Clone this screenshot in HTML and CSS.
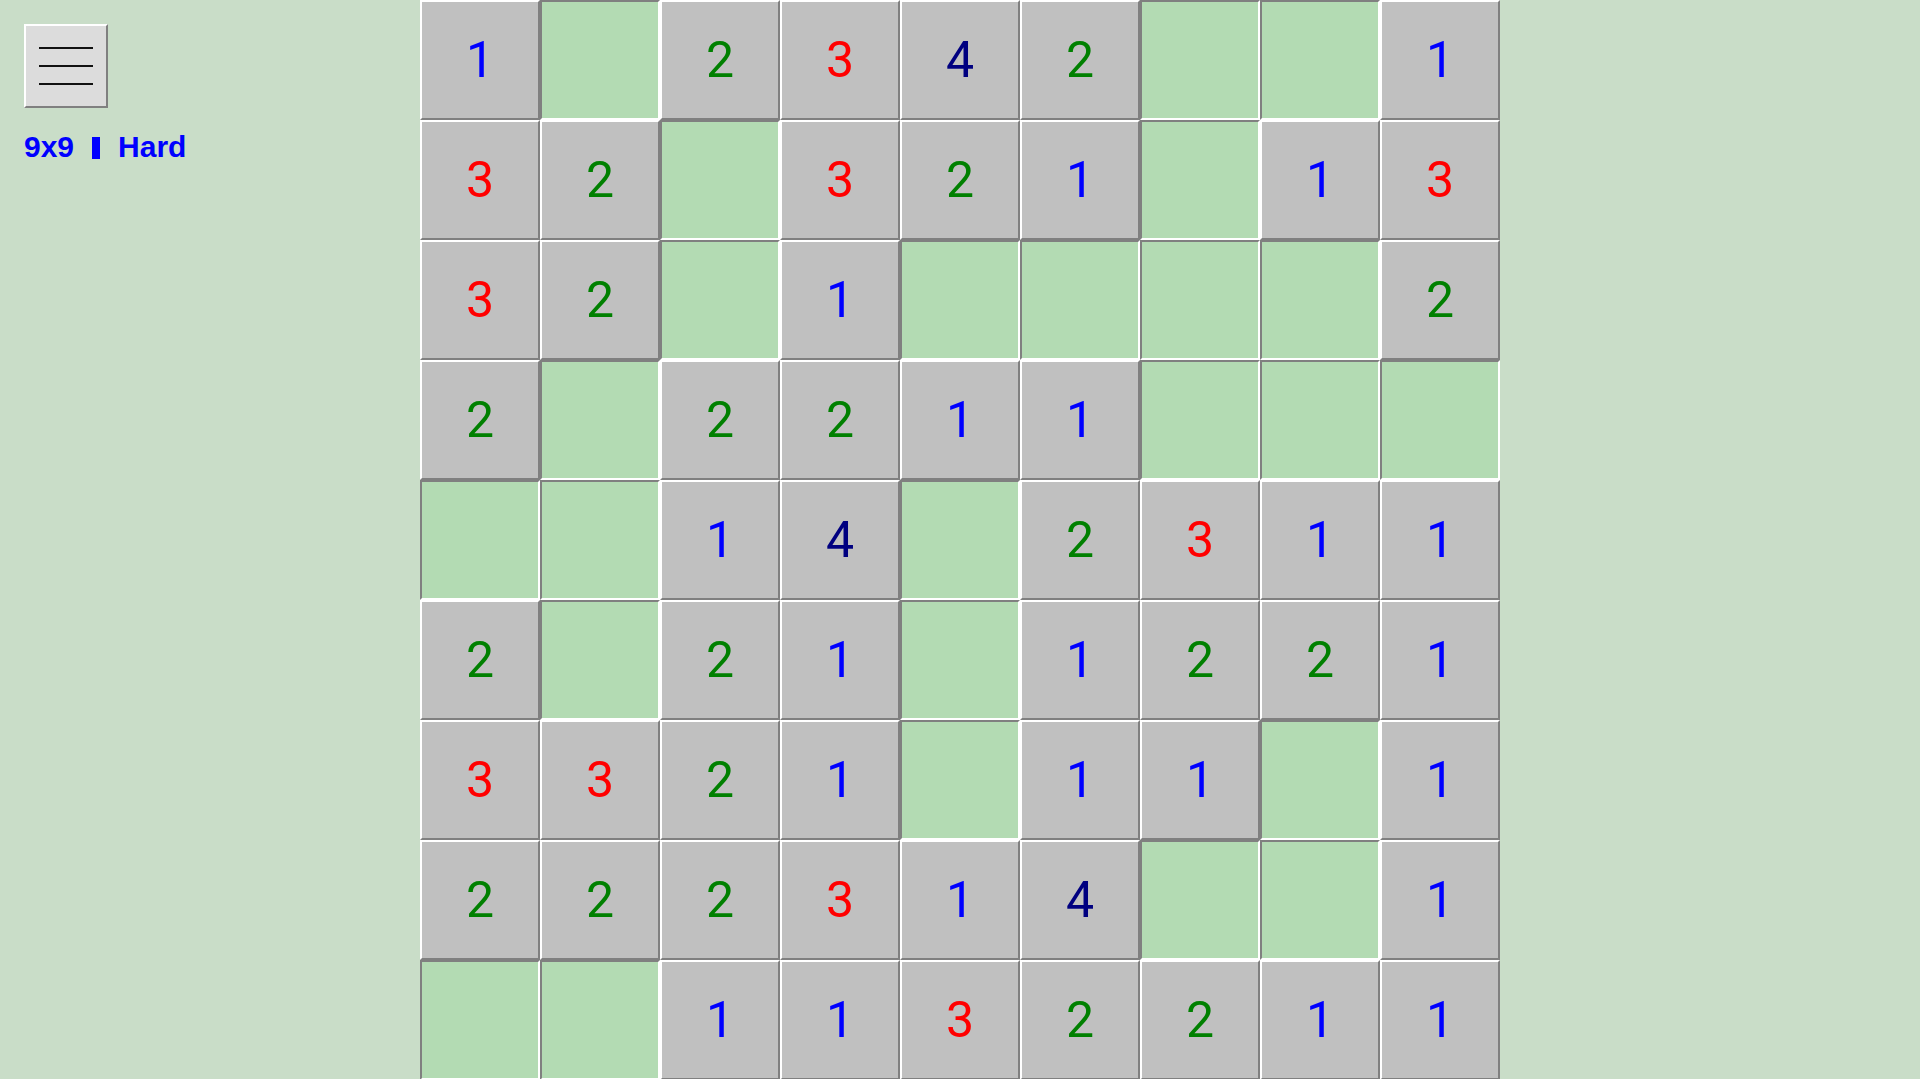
FILE: index.html
```html
<!DOCTYPE html>
<html lang="en">
<head>
    <meta charset="UTF-8" />
    <title>Minesweeper 9x9</title>
    <link rel="stylesheet" href="styles.css">
</head>
<body>
<div class="app">
    <!-- Left panel: menu + game info -->
    <div class="panel">
        <button class="menu-btn" aria-label="Menu">
            <span></span><span></span><span></span>
        </button>
        <div class="info">9x9 <span class="sep"></span> Hard</div>
    </div>

    <!-- Board -->
    <div class="board" id="board"></div>
</div>

<script>
    // 0 = opened empty, otherwise number of neighbouring mines
    const layout = [
        [1, 0, 2, 3, 4, 2, 0, 0, 1],
        [3, 2, 0, 3, 2, 1, 0, 1, 3],
        [3, 2, 0, 1, 0, 0, 0, 0, 2],
        [2, 0, 2, 2, 1, 1, 0, 0, 0],
        [0, 0, 1, 4, 0, 2, 3, 1, 1],
        [2, 0, 2, 1, 0, 1, 2, 2, 1],
        [3, 3, 2, 1, 0, 1, 1, 0, 1],
        [2, 2, 2, 3, 1, 4, 0, 0, 1],
        [0, 0, 1, 1, 3, 2, 2, 1, 1]
    ];

    const board = document.getElementById('board');
    layout.forEach(row => {
        row.forEach(n => {
            const cell = document.createElement('div');
            if (n === 0) {
                cell.className = 'cell open';
            } else {
                cell.className = 'cell n' + n;
                cell.textContent = n;
            }
            board.appendChild(cell);
        });
    });
</script>
</body>
</html>
```

FILE: styles.css
```css
html, body {
    height: 100%;
}
body {
    margin: 0;
    background: #c9ddc8;
    font-family: 'Liberation Sans', Arial, sans-serif;
    overflow: hidden;
}
.app {
    display: flex;
    align-items: flex-start;
}
/* Left panel */
.panel {
    width: 420px;
    box-sizing: border-box;
    padding: 24px;
}
.menu-btn {
    width: 84px;
    height: 84px;
    box-sizing: border-box;
    background: #dcdcdc;
    border: 2px solid;
    border-color: #fff #808080 #808080 #fff;
    padding: 0;
    display: flex;
    flex-direction: column;
    align-items: center;
    justify-content: center;
    gap: 16px;
    cursor: pointer;
}
.menu-btn span {
    display: block;
    width: 54px;
    height: 2px;
    background: #111;
}
.info {
    margin-top: 22px;
    color: #0000ff;
    font-weight: bold;
    font-size: 30px;
    display: flex;
    align-items: center;
}
.info .sep {
    display: inline-block;
    width: 8px;
    height: 22px;
    background: #0000ff;
    margin: 2px 18px 0 18px;
}
/* Board */
.board {
    display: grid;
    grid-template-columns: repeat(9, 120px);
    grid-auto-rows: 120px;
}
.cell {
    box-sizing: border-box;
    background: #c0c0c0;
    border: 2px solid;
    border-color: #fff #808080 #808080 #fff;
    display: flex;
    align-items: center;
    justify-content: center;
    font-family: Roboto, 'Liberation Sans', sans-serif;
    font-weight: 400;
    font-size: 50px;
    line-height: 1;
}
.cell.open {
    background: #b3dbb3;
    border-color: #808080 #fff #fff #808080;
}
.n1 { color: #0000ff; }
.n2 { color: #008000; }
.n3 { color: #ff0000; }
.n4 { color: #000080; }
```
